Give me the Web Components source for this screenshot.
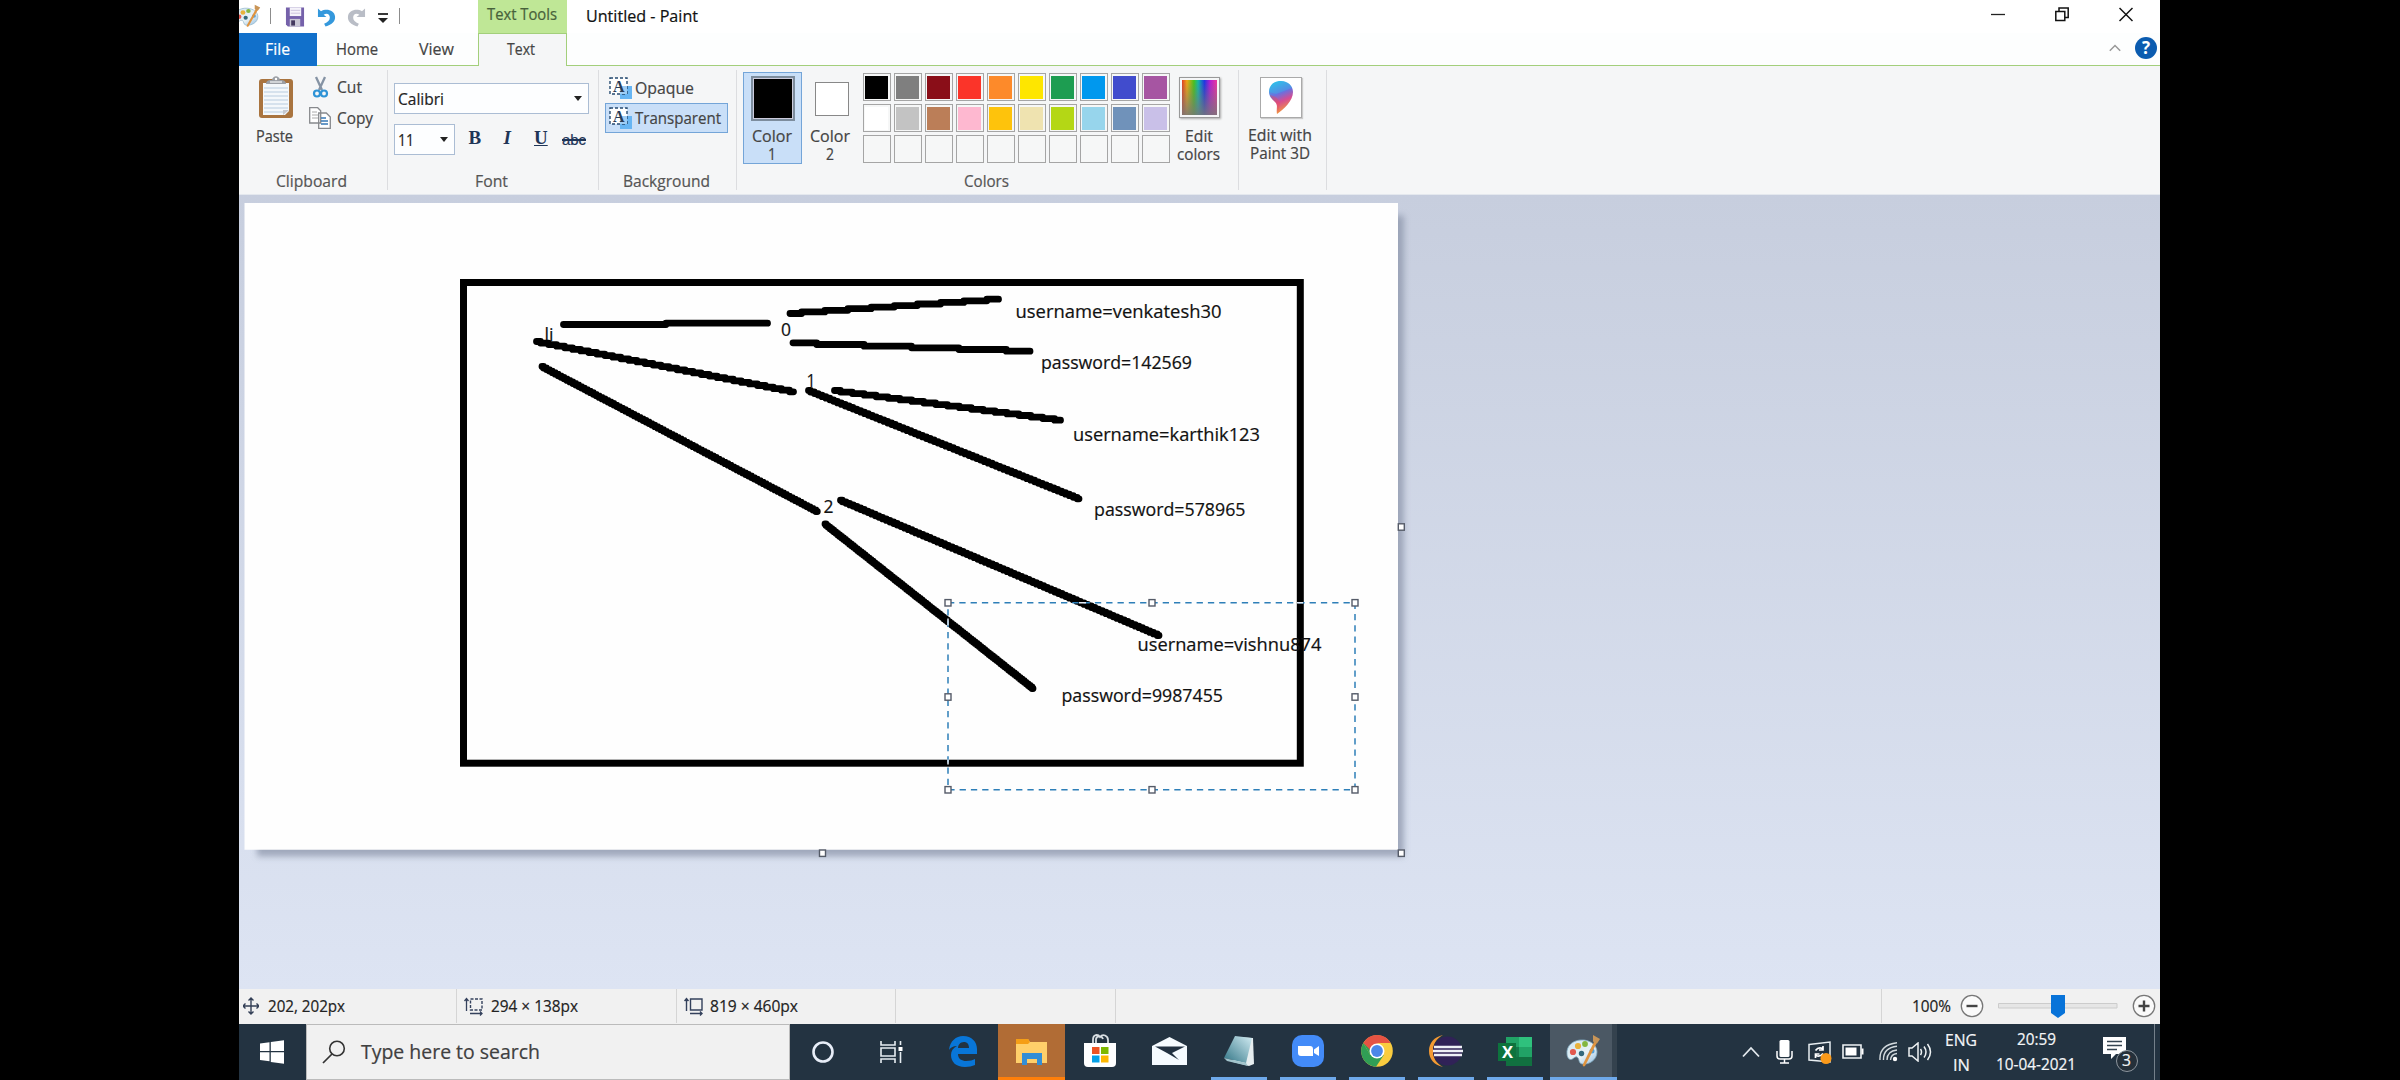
<!DOCTYPE html>
<html lang="en">
<head>
<meta charset="utf-8">
<title>Untitled - Paint</title>
<style>
html,body{margin:0;padding:0;background:#000;width:2400px;height:1080px;overflow:hidden}
body{font-family:"Open Sans","Noto Sans",sans-serif}
</style>
</head>
<body>
<paint-desktop></paint-desktop>
<script>
const define = (name, css, html, ready) => customElements.define(name, class extends HTMLElement {
  connectedCallback() {
    if (this.shadowRoot) return;
    const root = this.attachShadow({ mode: 'open' });
    root.innerHTML = '<style>:host{display:block;box-sizing:border-box}*{box-sizing:border-box}svg{display:block}' + css + '</style>' + (typeof html === 'function' ? html(this) : html);
    if (ready) ready(this, root);
  }
});

/* A single line of text condensed or widened to an exact width. */
define('fit-text', ':host{white-space:nowrap;flex:none}span{display:inline-block;transform-origin:0 50%;line-height:inherit;-webkit-text-stroke:.2px currentColor}:host([strike]) span{text-decoration:line-through 1.5px}',
  '<span><slot></slot></span>', (el, root) => {
    const w = +el.getAttribute('w');
    el.style.fontSize = (el.getAttribute('size') || 15.5) + 'px';
    el.style.lineHeight = (el.getAttribute('lh') || 20) + 'px';
    el.style.height = el.style.lineHeight;
    el.style.width = w + 'px';
    const s = root.querySelector('span');
    s.style.transform = 'translateX(-1px) scaleX(' + w / s.getBoundingClientRect().width + ')';
  });

const palette = `<svg width="36" height="34" viewBox="0 0 36 34">
<defs><linearGradient id="p" x1="0" y1="0" x2="1" y2="1"><stop offset="0" stop-color="#cfe6f2"/><stop offset=".6" stop-color="#e8f2f6"/><stop offset="1" stop-color="#8fbbe0"/></linearGradient></defs>
<path d="M2 20C1 12 8 5 19 6c8 1 13 6 13 12 0 8-8 13-15 12-4-1-2-5-5-7-3-1-4 4-8 2-1-1-2-3-2-5z" fill="url(#p)" stroke="#7fa9c0" stroke-width=".8"/>
<circle cx="8" cy="18" r="3.1" fill="#e2594e"/><circle cx="13" cy="12" r="3.1" fill="#e8b23c"/><circle cx="20" cy="10" r="2.9" fill="#83b741"/><circle cx="16.500" cy="19.500" r="2.700" fill="#34697c"/><circle cx="27" cy="17" r="2.500" fill="#55a0d8"/>
<path d="M30 6l2.500 1.500L20 32c-1.500 1-2.500 0-2.200-1.600z" fill="#e0943f"/><path d="M28 1l7 4-3 4.500-4-2z" fill="#c99557"/></svg>`;

define('title-bar', `:host{height:33px;display:flex;align-items:flex-start;background:#fff;color:#111}
.q{display:flex;align-items:center;height:32px;width:239px}.sep{width:1px;height:16px;background:#8c8c8c}
.ctx{width:89px;height:33px;background:#bfe796;padding:2px 0 0 9.500px;color:#47613a}
.ttl{padding:0 0 0 20px;margin-top:4px}.btn{display:flex;margin-left:auto;gap:50px;padding:7px 27px 0 0}`,
`<div class="q"><svg width="22" height="24" viewBox="8 0 28 34" preserveAspectRatio="none">${palette.replace(/^<svg[^>]*>|<\/svg>$/g,'')}</svg>
<span class="sep" style="margin:0 14px 0 9px"></span>
<svg style="margin-top:2px" width="20" height="20" viewBox="0 0 21 20"><path d="M1 0h19v20H3l-2-2z" fill="#7561aa"/><path d="M5 0h12v9H5z" fill="#f5f3fa"/><path d="M6 3h10M6 6h10" stroke="#cbc3dd"/><path d="M5 12h11v8H5z" fill="#c9c7d5"/><path d="M6.500 13.500h4V19h-4z" fill="#44395f"/></svg>
<svg style="margin:1px 0 0 12px" width="19" height="20" viewBox="0 0 20 20"><path d="M1 1v9h9L7 7.500C10 5.500 13.500 6.500 13.500 10.500c0 3-2 5-6 6.500L9 20C16 18 19.500 14.500 19 9.500 18.300 3 10 .5 4.200 4z" fill="#3498dc"/></svg>
<svg style="margin:1px 0 0 11px" width="19" height="20" viewBox="0 0 20 20"><path d="M19 1v9h-9l3-2.500C10 5.500 6.500 6.500 6.500 10.500c0 3 2 5 6 6.500L11 20C4 18 .5 14.500 1 9.500 1.700 3 10 .5 15.800 4z" fill="#b9bdc6"/></svg>
<svg style="margin:4px 0 0 12px" width="10" height="11"><path d="M0 1h10" stroke="#222" stroke-width="1.800"/><path d="M0 5h10l-5 5z" fill="#222"/></svg>
<span class="sep" style="margin-left:11px"></span></div>
<div class="ctx"><fit-text w="70" size="15.5" lh="25">Text Tools</fit-text></div>
<div class="ttl"><fit-text w="112" size="16" lh="25">Untitled - Paint</fit-text></div>
<div class="btn"><svg width="14" height="15"><path d="M0 7.500h14" stroke="#222" stroke-width="1.300"/></svg>
<svg width="14" height="15"><path d="M.8 4.500h9v9h-9zM4 4V1h9.200v9.500h-3" fill="none" stroke="#111" stroke-width="1.500"/></svg>
<svg width="14" height="15"><path d="M.5 1l13 13M13.500 1l-13 13" stroke="#111" stroke-width="1.500"/></svg></div>`);

define('tab-strip', `:host{height:33px;display:flex;background:#fdfefe;color:#444}
.file{width:77.500px;background:#1170cb;color:#fff;padding-left:26.500px}
.rest{border-bottom:1.500px solid #a3cf7b;flex:1;display:flex;justify-content:flex-end;align-items:center;gap:14px;padding:0 3px 2px 0}
.u{border-bottom:1.500px solid #a3cf7b;width:161.500px;display:flex;gap:41px;padding-left:20px}
.on{width:89px;background:#f5f6f7;border:1.500px solid #a3cf7b;border-bottom:0;padding-left:28.500px}
.h{width:22px;height:22px;border-radius:50%;background:#0b5cb0;color:#fff;text-align:center;font:bold 17px/22px "Open Sans",sans-serif}`,
`<div class="file"><fit-text w="25" lh="32">File</fit-text></div>
<div class="u"><fit-text w="42" lh="32">Home</fit-text><fit-text w="35" lh="32">View</fit-text></div>
<div class="on"><fit-text w="28" lh="31">Text</fit-text></div>
<div class="rest"><svg width="12" height="8"><path d="M.8 6.800L6 1.500l5.200 5.300" fill="none" stroke="#999" stroke-width="1.500"/></svg><div class="h">?</div></div>`);

define('ribbon-group', `:host{height:120px;border-right:1px solid #dcdde0;display:flex;flex-direction:column;flex:none}
.c{flex:1;display:flex;align-items:flex-start}.l{display:flex;justify-content:center;color:#555;height:20px;margin:0 1px -1px 0}`,
el => `<div class="c"><slot></slot></div><div class="l">${el.getAttribute('label') ? `<fit-text w="${el.getAttribute('lw')}">${el.getAttribute('label')}</fit-text>` : ''}</div>`,
el => el.style.width = el.getAttribute('w') + 'px');

define('colour-cell', `:host{width:28px;height:28px;border:1.500px solid #a5a5a5;padding:1.500px;background:#f6f7f7}div{height:100%}`,
  '<div></div>', (el, r) => { const c = el.getAttribute('c'); if (c) r.querySelector('div').style.background = c; });

const opq = `<svg width="23" height="22" viewBox="0 0 23 22"><path d="M11 9h12v13H11z" fill="#67b5f3"/><path d="M1 1h17v16H1z" fill="#fff" stroke="#254a70" stroke-width="1.400" stroke-dasharray="3 2"/><path d="M11 9h7v8h-7z" fill="#9fcdf4"/><text x="4" y="14.500" font-family="Liberation Serif" font-weight="bold" font-size="16" fill="#2a3c55">A</text></svg>`;
const cells = ['#000','#7f7f7f','#8a0e18','#fb3429','#fd8a2a','#fee600','#1d9d51','#0098ee','#414ccd','#a655a2','#fff','#c3c3c3','#bb7e58','#feb8d0','#fec30c','#efe3b0','#b4d715','#97d5ec','#7092ba','#c9c0e8'];

define('paint-ribbon', `:host{height:128.500px;background:#f5f6f7;display:flex;padding-top:4px;color:#444;border-bottom:1px solid #e4e8ee}
.col{display:flex;flex-direction:column}.row{display:flex;align-items:center}
.box{background:#fdfeff;border:1.500px solid #abbdd4;height:31px;display:flex;align-items:center;justify-content:space-between;padding:0 6px 0 4px;color:#222}
.fmt{display:flex;color:#1f3557;font:bold 19px/24px "Liberation Serif",serif}
.sel{background:#c9dff8;border:1.500px solid #74a5d8}
.big{align-items:center;flex:none}
.pal{display:grid;grid-template-columns:repeat(10,28px);gap:3px}
.spec{width:41px;height:41px;border:1.500px solid #999;background:linear-gradient(transparent,#777d),linear-gradient(90deg,#e23c22,#f2a613 14%,#45c41a 34%,#10b9a8 46%,#1c34e5 64%,#b11bd6 80%,#f0369c);background-clip:content-box;background-origin:content-box;padding:2px;box-shadow:1px 1px 2px #aaa}
.p3{width:42px;height:41px;border:1.500px solid #aaa;background:#fff;display:flex;justify-content:center;align-items:center;box-shadow:1px 1px 1px #ccc}`,
`<ribbon-group w="149" label="Clipboard" lw="71">
 <div class="col big" style="padding:6px 0 0 18px">
  <svg width="36" height="43" viewBox="0 0 36 43"><rect x="1" y="3" width="34" height="39" rx="3" fill="#a9743f"/><path d="M5 7h26v28l-4 4H5z" fill="#f4f8fb"/><path d="M6 12h24M6 16h24M6 20h24M6 24h24M6 28h24M6 32h24M6 36h20" stroke="#b7cbe0" stroke-width="1.200"/><path d="M25 39v-5h6z" fill="#c6c9d0"/><path d="M8 8c0-4 4-4 6-4 1-5 7-5 8 0 2 0 6 0 6 4z" fill="#9b9fa5"/><path d="M12 6h12" stroke="#e3e6e8" stroke-width="1.500"/><circle cx="18" cy="3" r="1.200" fill="#fff"/></svg>
  <fit-text w="37" style="margin-top:6.500px">Paste</fit-text></div>
 <div class="col" style="padding:6px 0 0 15px;gap:9px">
  <div class="row" style="height:22px"><svg width="22" height="22" viewBox="0 0 22 22" style="margin-right:6.500px"><path d="M7 1l6 13M16 1l-6 13" stroke="#8593a4" stroke-width="2.300"/><circle cx="8" cy="17.500" r="3" fill="none" stroke="#2e93d6" stroke-width="2.200"/><circle cx="15" cy="17.500" r="3" fill="none" stroke="#2e93d6" stroke-width="2.200"/></svg><fit-text w="25">Cut</fit-text></div>
  <div class="row" style="height:22px"><svg width="22" height="22" viewBox="0 0 22 22" style="margin-right:6.500px"><path d="M.7.700h8l3 3V16H.7zM9.700 6h7.600l4 4v11.300H9.700z" fill="#fff" stroke="#87898d" stroke-width="1.300"/><path d="M3 5h5M3 8h6M3 11h6" stroke="#aaa"/><path d="M12 11h5M12 14h7M12 17h7" stroke="#3778b5" stroke-width="1.300"/></svg><fit-text w="36">Copy</fit-text></div>
 </div></ribbon-group>
<ribbon-group w="211" label="Font" lw="33"><div class="col" style="padding:13px 0 0 6px;gap:10px">
 <div class="box" style="width:195px"><fit-text w="46">Calibri</fit-text><svg width="8" height="5"><path d="M0 0h8l-4 5z" fill="#222"/></svg></div>
 <div class="row"><div class="box" style="width:60.500px"><fit-text w="16">11</fit-text><svg width="8" height="5"><path d="M0 0h8l-4 5z" fill="#222"/></svg></div>
 <div class="fmt"><span style="width:33px;padding-left:14px">B</span><i style="width:33px;padding-left:16px">I</i><u style="margin-left:13.500px;width:14px">U</u><fit-text strike w="24" size="15" lh="27" style="margin-left:15px;font-family:'Liberation Sans';font-weight:normal">abc</fit-text></div></div></div></ribbon-group>
<ribbon-group w="138" label="Background" lw="87"><div class="col" style="padding:3px 0 0 6px">
 <div class="row" style="height:30px;padding-left:4px;gap:4px">${opq}<fit-text w="59">Opaque</fit-text></div>
 <div class="row sel" style="height:30px;width:122.500px;padding-left:2.500px;gap:4px">${opq}<fit-text w="86">Transparent</fit-text></div></div></ribbon-group>
<ribbon-group w="502" label="Colors" lw="45"><div class="row" style="align-items:flex-start;padding:2px 0 0 6px;margin-right:-8px">
 <div class="col big sel" style="width:59px;height:92px;padding-top:3px"><div style="width:44px;height:45px;border:2px solid #7d8d9e;background:#000;box-shadow:inset 0 0 0 1px #ccd"></div><fit-text w="40" lh="18" style="margin-top:5.500px">Color</fit-text><fit-text w="8" lh="18">1</fit-text></div>
 <div class="col big" style="width:59px;padding:10px 1px 0 0"><div style="width:34px;height:34px;border:1.500px solid #888;background:#fff;margin-left:1px"></div><fit-text w="40" lh="18" style="margin-top:11px">Color</fit-text><fit-text w="8" lh="18">2</fit-text></div>
 <div class="pal" style="margin:1px 0 0 1.500px">${Array.from({length:30},(_, i)=>`<colour-cell ${cells[i]?`c="${cells[i]}"`:''}></colour-cell>`).join('')}</div>
 <div class="col big" style="width:60px;padding-top:5px"><div class="spec"></div><fit-text w="28" lh="18" style="margin-top:9px">Edit</fit-text><fit-text w="43" lh="18">colors</fit-text></div></div></ribbon-group>
<ribbon-group w="88"><div class="col big" style="width:84px;padding-top:7px"><div class="p3"><svg width="26" height="35" viewBox="0 0 26 35"><defs><linearGradient id="g" x1=".3" y1="0" x2=".6" y2="1"><stop offset="0" stop-color="#2cc3ea"/><stop offset=".38" stop-color="#6971df"/><stop offset=".62" stop-color="#d54c93"/><stop offset="1" stop-color="#f8a52d"/></linearGradient></defs><path d="M13 1C5 1 1 6 1 12c0 5 4 8 7 11 2 3 0 6 1 11 7-5 16-13 16-22C25 6 20 1 13 1z" fill="url(#g)"/><path d="M13 1C6 1 1 6 1 12l7 2L24 8C22 3 18 1 13 1z" fill="#33b9ea" opacity=".35"/><path d="M2 15c5 1 8 3 10 8l-2 9c-1-3 0-6-2-9-3-3-5-5-6-8z" fill="#ef4b55" opacity=".4"/></svg></div>
 <fit-text w="64" lh="18" style="margin-top:8px">Edit with</fit-text><fit-text w="60" lh="18">Paint 3D</fit-text></div></ribbon-group>`);

/* Drawing surface. The view box maps to screen coordinates. */
const L = [[536.5,341,793.5,391.3],[542,366,817.3,511],[790,313,998.5,298.7],[793,342.3,1030,350.7],[834.5,390,1060.5,419.7],[808.5,390,1079,498.3],[840.5,499.7,1159,635],[825,523.5,1033,688]];
const T = [['username=venkatesh30',1015.5,317,206],['password=142569',1041,368,151],['username=karthik123',1073,440,187],['password=578965',1094,515.5,151.5],['username=vishnu874',1137.5,650.5,184],['password=9987455',1061.5,701.5,161.5],['0',781,335.5,10],['1',806.5,386,9],['2',823.5,512.5,10],['li',544.5,340,9]];
const H = (x, y) => `<rect x="${x-3}" y="${y-3.2}" width="6" height="6.400" fill="#fff" stroke="#555b68" stroke-width="1.400"/>`;
/* Brush strokes advance in whole steps, as an aliased brush does. */
const stroke = ([x1,y1,x2,y2]) => {
  const step = 1.55, rows = Math.max(1, Math.round(Math.abs(y2 - y1) / step));
  let d = `M${x1} ${y1}`;
  for (let i = 0; i < rows; i++) { d += `H${(x1 + (x2 - x1) * (i + .5) / rows).toFixed(1)}V${(y1 + (y2 - y1) * (i + 1) / rows).toFixed(1)}`; }
  return d + `H${x2}`;
};
define('paint-workspace', `:host{height:794px;background:linear-gradient(#c7cede,#dde4f3)}`,
`<svg width="1921" height="794" viewBox="239 194.500 1921 794"><defs><filter id="b"><feGaussianBlur stdDeviation="3"/></filter></defs>
<path d="M257 215H1404V856H257z" fill="#8c95aa" opacity=".75" filter="url(#b)"/><path d="M244.500 202.500H1398V849.300H244.500z" fill="#fefefe"/>
<rect x="463.500" y="282" width="836.800" height="480.700" fill="none" stroke="#000" stroke-width="7"/>
<g fill="#111" stroke="#111" stroke-width=".2" font-family="'Open Sans','Noto Sans',sans-serif" font-size="17.500">${T.map(t=>`<text x="${t[1]}" y="${t[2]}" textLength="${t[3]}" lengthAdjust="spacingAndGlyphs">${t[0]}</text>`).join('')}</g>
<g fill="none" stroke="#000" stroke-width="6.800" stroke-linecap="round" stroke-linejoin="round"><path d="M563.500 324H666V322.700H767.500"/>${L.map(l=>`<path d="${stroke(l)}"/>`).join('')}</g>
<path d="M948 602.300H1355V789.300H948z" fill="none" stroke-width="1.500" stroke="#2e7fb8" stroke-dasharray="6.300 5"/>
<path d="M1079 602.300h7M1297 602.300h6M948 618v7M948 759v5" stroke="#e6eef8" stroke-width="1.500"/>
${[[948,602.3],[1152,602.3],[1355,602.3],[948,696.5],[1355,696.5],[948,789.3],[1152,789.3],[1355,789.3],[1401.3,526.5],[822.5,852.7],[1401.3,852.7]].map(p=>H(...p)).join('')}</svg>`);

define('status-bar', `:host{height:35px;background:#f1f1f1;display:flex;color:#222}
.c{border-right:1px solid #d5d5d5;height:34px;display:flex;align-items:center;flex:none;padding:1px 0 0 7px}svg{flex:none}`,
`<div class="c" style="width:218px;padding-left:4px;gap:9.500px"><svg width="16" height="18" viewBox="0 0 16 18"><path d="M8 1v16M0 9h16M5.500 3.500L8 1l2.500 2.500M5.500 14.500L8 17l2.500-2.500M2.500 6.500L0 9l2.500 2.500M13.500 6.500L16 9l-2.500 2.500" fill="none" stroke="#333f56" stroke-width="1.400"/></svg><fit-text w="77" size="16">202, 202px</fit-text></div>
<div class="c" style="width:219.500px;gap:8.500px"><svg width="19" height="19" viewBox="0 0 19 19"><path d="M2.500 14V2M.5 4l2-2.500 2 2.500M6 16.500h12M16 14.500l2 2-2 2" fill="none" stroke="#34415c" stroke-width="1.300"/><path d="M6.500 2H18v11H6.500z" fill="none" stroke="#34415c" stroke-width="1.400" stroke-dasharray="3 1.500"/></svg><fit-text w="87" size="16">294 × 138px</fit-text></div>
<div class="c" style="width:219.500px;gap:8px;padding-left:7.500px"><svg width="19" height="19" viewBox="0 0 19 19"><path d="M2.500 14V2M.5 4l2-2.500 2 2.500M6 16.500h12M16 14.500l2 2-2 2M6.500 2H18v11H6.500z" fill="none" stroke="#34415c" stroke-width="1.400"/></svg><fit-text w="88" size="16">819 × 460px</fit-text></div>
<div class="c" style="width:220px"></div><div class="c" style="width:766px"></div>
<div class="c" style="border:0;padding-left:31px"><fit-text w="39" size="16">100%</fit-text>
<svg style="margin-left:8px" width="24" height="24"><circle cx="12" cy="12" r="10.700" fill="#fafafa" stroke="#777" stroke-width="1.300"/><path d="M6.500 12h11" stroke="#444" stroke-width="2.400"/></svg>
<svg style="margin-left:14px" width="120" height="26"><path d="M.5 10.500h118.500v4.500H.5z" fill="#e6e6e6" stroke="#ccc"/><path d="M53 2h14v18l-7 5-7-5z" fill="#0873d9"/></svg>
<svg style="margin-left:14px" width="24" height="24"><circle cx="12" cy="12" r="10.700" fill="#fafafa" stroke="#777" stroke-width="1.300"/><path d="M6.500 12h11M12 6.500v11" stroke="#444" stroke-width="2.400"/></svg></div>`);

define('task-item', `:host{width:69px;height:56.500px;flex:none;padding-right:2px}
.b{height:100%;display:flex;justify-content:center;align-items:center;background:var(--tile,transparent);border-bottom:3px solid var(--line,transparent);padding-top:2px}
:host([run]) .b{width:56.500px;margin:0 5px 0 6px;--line:#6ea9ea}`,
`<div class="b"><slot></slot></div>`);

const task = (svg, a='') => `<task-item ${a}>${svg}</task-item>`;
define('task-bar', `:host{height:56.500px;background:#233341;display:flex;color:#f4f6f8}
.start{width:66.500px;display:flex;align-items:center;padding-left:20.500px}
.search{width:484px;background:#f1f1f1;border:1px solid #bbb;display:flex;align-items:center;padding:0 0 0 15px;gap:16.500px;color:#404040}
.mid{width:67px;display:flex;justify-content:center;align-items:center}
.tray{margin-left:auto;width:418px;display:flex;align-items:center;flex:none}.tray svg{flex:none}
.lines{display:flex;flex-direction:column;align-items:center;gap:5px}
.note{position:relative;width:34px;height:34px}.badge{position:absolute;left:13px;top:14px;width:22px;height:22px;border:1.500px solid #8d969e;border-radius:50%;background:#25303a;display:flex;justify-content:center;padding-left:1px}`,
`<div class="start"><svg width="24" height="24"><path d="M0 3.500l9.500-1.300V11H0zM10.800 2L24 .2V11H10.800zM0 12.300h9.500v9L0 20zM10.800 12.300H24v11.500l-13.200-1.900z" fill="#fff"/></svg></div>
<div class="search"><svg width="24" height="24"><circle cx="15" cy="8.500" r="7.300" fill="none" stroke="#333" stroke-width="1.600"/><path d="M10 14l-9 9" stroke="#333" stroke-width="1.700"/></svg><fit-text w="179" size="19.500" lh="28">Type here to search</fit-text></div>
<div class="mid"><svg width="22" height="22"><circle cx="11" cy="11" r="9.500" fill="none" stroke="#e8eef8" stroke-width="2.600"/></svg></div>
<div class="mid" style="width:72px;padding-right:4px"><svg width="24" height="24" viewBox="0 0 24 24"><path d="M2 1v4h14V1M2 23v-4h14v4M2 8h14v8H2z" fill="none" stroke="#e6edf2" stroke-width="1.600"/><path d="M21.500 1v4M21.500 12v11" stroke="#e6edf2" stroke-width="1.600"/><path d="M19.500 7h4v4h-4z" fill="#fff"/></svg></div>
${task(`<svg width="29" height="31" viewBox="0 0 29 31"><path d="M1 14C2 5 8 0 15 0c9 0 14 6 14 13v5H10c0 5 4 7 8 7 4 0 7-1 9-2v6c-3 1-6 2-10 2C8 31 3 26 3 19c0-4 2-7 6-9-4 0-7 2-8 4zm9-2h11c0-4-2-6-5-6-4 0-6 3-6 6z" fill="#0876d8"/></svg>`)}
${task(`<svg width="31" height="27" viewBox="0 0 31 27"><path d="M0 1h12l2 3h17v21H0z" fill="#ffcf6a"/><path d="M0 1h12l2 3-2 2H0z" fill="#f59e16"/><path d="M6 27V15h20v12h-5v-6H11v6z" fill="#338ed6"/></svg>`,'style="--tile:#b16c35;--line:#ff7f0a"')}
${task(`<svg width="34" height="34" viewBox="0 0 34 34"><path d="M10 10V6c0-6 5-6 7-3 3-4 8-1 8 3v4M13 9V5c1-4 6-3 7 0" fill="none" stroke="#d8dee2" stroke-width="1.800"/><path d="M1 9h32v20q0 4-4 4H5q-4 0-4-4z" fill="#fff"/><path d="M9 13h7.500v7H9z" fill="#ee5423"/><path d="M18 13h7.500v7H18z" fill="#7eb801"/><path d="M9 21.500h7.500v7H9z" fill="#06a0e6"/><path d="M18 21.500h7.500v7H18z" fill="#fdb702"/></svg>`)}
${task(`<svg width="35" height="28" viewBox="0 0 35 28"><path d="M0 9L17.500 0 35 9v19H0z" fill="#f5fbff"/><path d="M3 9.500h30L20 16l7 7-12-7z" fill="#213141"/></svg>`)}
${task(`<svg width="32" height="32" viewBox="0 0 32 32"><defs><linearGradient id="n" x1="0" y1="1" x2="1" y2="0"><stop offset="0" stop-color="#2f7384"/><stop offset="1" stop-color="#d3edf4"/></linearGradient></defs><path d="M12 2l18 1 1 26-5 2-16-4z" fill="#e6edef"/><path d="M12 1l17 2-6 25L1 23z" fill="url(#n)"/><path d="M1 23l22 5 2 3-21-5z" fill="#a2c4cc"/></svg>`,'run')}
${task(`<svg width="32" height="32" viewBox="0 0 32 32"><rect width="32" height="32" rx="10" fill="#438bf8"/><path d="M6 11h12q3 0 3 3v7H9q-3 0-3-3zM22 14.500l5-3.500v10l-5-3z" fill="#fff"/></svg>`,'run')}
${task(`<svg width="32" height="32" viewBox="0 0 32 32"><circle cx="16" cy="16" r="15.800" fill="#f9cc3f"/><path d="M2.300 8A15.800 15.800 0 0 1 29.700 8H16z" fill="#e65343"/><path d="M2.300 8A15.800 15.800 0 0 0 15 31.800L22.800 20 16 17 9.200 20z" fill="#309e55"/><path d="M2.300 8L9.200 20 16 8z" fill="#309e55"/><path d="M2.300 8h15l-8 7z" fill="#e65343"/><circle cx="16" cy="16" r="7.500" fill="#fff"/><circle cx="16" cy="16" r="5.900" fill="#4c87e8"/></svg>`,'run')}
${task(`<svg width="34" height="32" viewBox="0 0 34 32"><path d="M14 0C5 2 0 8 0 16s5 14 14 16C7 28 4 23 4 16S7 4 14 0z" fill="#f49a33"/><circle cx="18.500" cy="16" r="14.500" fill="#302257"/><path d="M5 12h28M4 16h30M5 20h28" stroke="#eef0f6" stroke-width="2.600"/></svg>`,'run')}
${task(`<svg width="34" height="31" viewBox="0 0 34 31"><path d="M8 1h26v29H8z" fill="#21a366"/><path d="M21 1h13v10H21z" fill="#2fc17d"/><path d="M8 11h13v10H8z" fill="#14794a"/><path d="M8 21h26v9H8z" fill="#117040"/><path d="M0 7h18v18H0z" fill="#0d733d"/><text x="4" y="22" font-family="Open Sans" font-size="16.500" font-weight="bold" fill="#fff">X</text></svg>`,'run')}
${task(palette,'style="--tile:linear-gradient(90deg,#4b5864 62px,#34424e 62px);--line:#6ea9ea"')}
<div class="tray"><svg width="18" height="12"><path d="M1 10.500l8-8.500 8 8.500" fill="none" stroke="#e4eaee" stroke-width="1.800"/></svg>
<svg style="margin-left:16px" width="17" height="24" viewBox="0 0 17 24"><rect x="3.500" y="0" width="10" height="17" rx="1.500" fill="#fff"/><path d="M1 11v5q0 3 3 3h9q3 0 3-3v-5M8.500 19v4M4 23h9" fill="none" stroke="#fff" stroke-width="1.500"/></svg>
<svg style="margin:2px 0 0 15px" width="24" height="24" viewBox="0 0 24 24"><path d="M1 3.500l21-2.500v20L1 19z" fill="none" stroke="#e8eef1" stroke-width="1.500"/><path d="M7.500 9.500q3-4 7-2M15 5v4h-4M15 12.500q-3 4-7 2M7.500 17v-4h4" fill="none" stroke="#fff" stroke-width="1.700"/><circle cx="18" cy="17.500" r="5.500" fill="#fb9a1a"/></svg>
<svg style="margin-left:10px" width="22" height="15"><path d="M1 1h18v13H1z" fill="none" stroke="#eef2f4" stroke-width="1.600"/><path d="M3.500 3.500h11v8h-11z" fill="#fff"/><path d="M20.500 4.500v6" stroke="#fff" stroke-width="2"/></svg>
<svg style="margin-left:15px" width="20" height="20"><circle cx="16" cy="17" r="2.200" fill="#fff"/><path d="M11.500 18Q12 12 18 11.500M8 18Q8 9 18 8M4.500 18Q4 6 18 4.300M1 18Q0 3 18 .8" fill="none" stroke="#d2dade" stroke-width="1.400"/></svg>
<svg style="margin-left:9px" width="24" height="20" viewBox="0 0 24 20"><path d="M1 6h3l6-5v18l-6-5H1z" fill="none" stroke="#eef2f4" stroke-width="1.500"/><path d="M12.500 7q2 3 0 6M16 4.500q4 5.500 0 11M19.500 2q6 8 0 16" fill="none" stroke="#eef2f4" stroke-width="1.500"/></svg>
<div class="lines" style="margin:1px 0 0 14px"><fit-text w="32" size="16">ENG</fit-text><fit-text w="17" size="16">IN</fit-text></div>
<div class="lines" style="margin-left:19px"><fit-text w="39" size="16">20:59</fit-text><fit-text w="80" size="16">10-04-2021</fit-text></div>
<div class="note" style="margin:2px 0 0 26px"><svg width="24" height="24"><path d="M0 1h23v17H13l-5 5v-5H0z" fill="#fff"/><path d="M4 5.500h15M4 9.500h15M4 13.500h10" stroke="#344450" stroke-width="1.500"/></svg><div class="badge"><fit-text w="9" size="15.5" lh="18">3</fit-text></div></div>
<div style="width:1px;height:56px;background:#74808a;margin-left:17px"></div></div>`);

define('paint-desktop', `:host{width:1921px;height:1080px;margin-left:239px;overflow:hidden;display:flex;flex-direction:column}
title-bar,tab-strip,paint-ribbon,paint-workspace,status-bar,task-bar{flex:none}`,
`<title-bar></title-bar><tab-strip></tab-strip><paint-ribbon></paint-ribbon><paint-workspace></paint-workspace><status-bar></status-bar><task-bar></task-bar>`);
</script>
</body>
</html>
